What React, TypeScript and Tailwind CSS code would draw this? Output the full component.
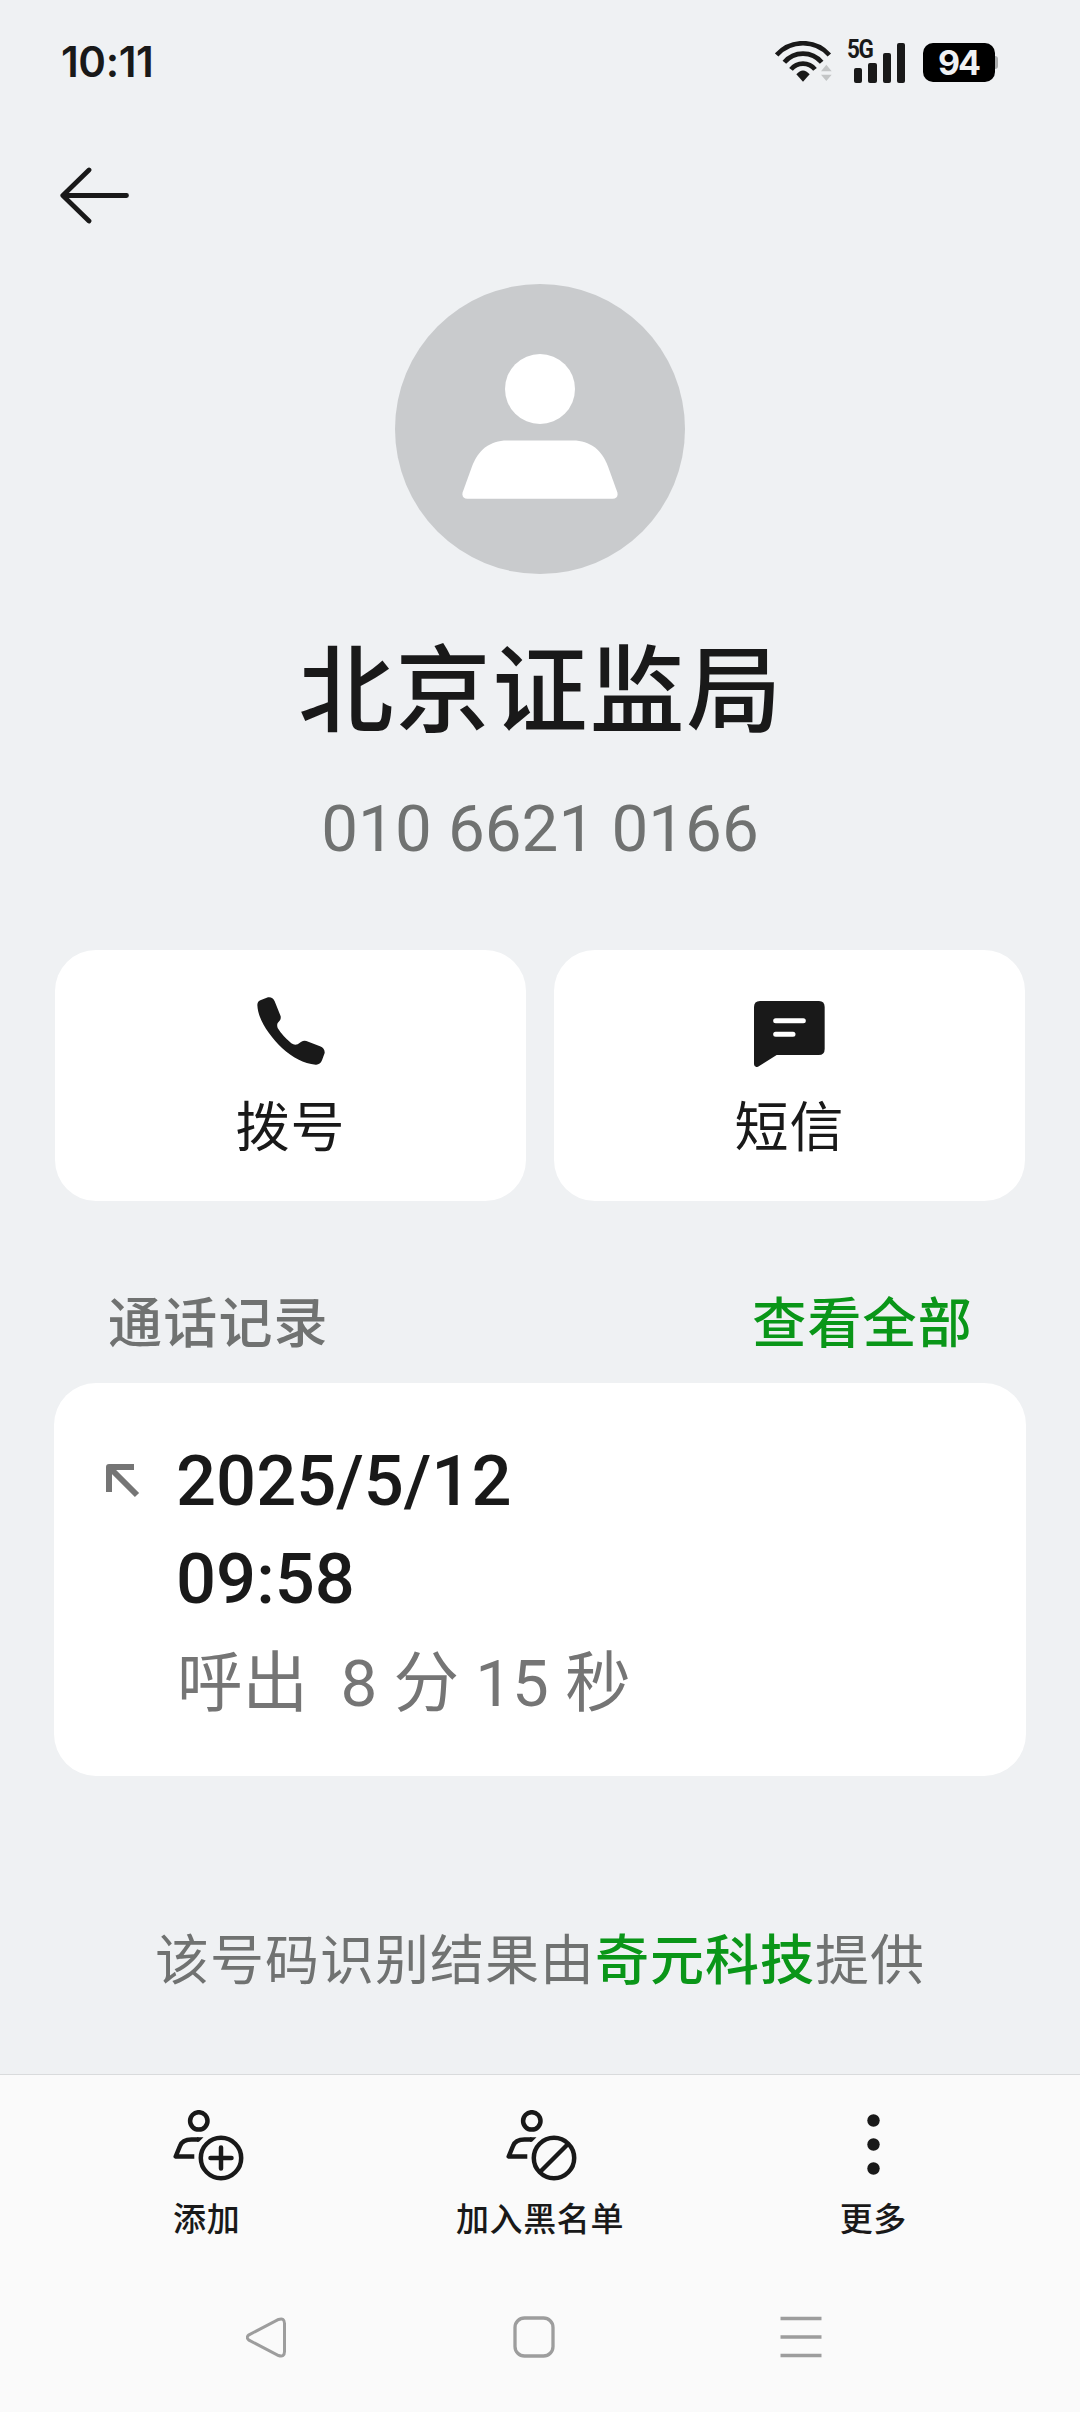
import type { ReactNode } from 'react';

function StatusBar() {
  return (
    <div className="flex h-[120px] items-start justify-between pr-[82px] pl-[61px]">
      <span className="mt-[37px] font-['Inter',sans-serif] text-[42px] leading-[50px] font-semibold tracking-[-0.4px]">
        10:11
      </span>

      <div className="mt-[41px] flex h-[42px] items-start">
        <svg width="58" height="42" viewBox="45 64 174 126" fill="none">
          <g stroke="#191919" strokeWidth="14">
            <path d="M50 106A106 106 0 0 1 208 106" />
            <path d="M73 128A73 73 0 0 1 185 128" />
            <path d="M93 149A46 46 0 0 1 165 149" />
          </g>
          <path d="M109 164Q129 141 149 164L129 186Z" fill="#191919" />
          <path d="M183 155L199 135L215 155ZM183 165L199 184L215 165Z" fill="#c3c5c6" />
        </svg>

        {/* 5G label sits above the two short bars */}
        <div className="relative ml-[21px] flex h-[42px] w-[52px] items-end gap-[6px]">
          <span className="absolute -top-[1px] -left-[7px] origin-left scale-x-[0.9] font-['Roboto',sans-serif] text-[25px] leading-[20px] font-bold tracking-[-1.5px]">
            5G
          </span>
          <span className="h-[15px] w-[8px] rounded-[2px] bg-[#191919]" />
          <span className="h-[20px] w-[9px] rounded-[2px] bg-[#191919]" />
          <span className="h-[30px] w-[8px] rounded-[2px] bg-[#191919]" />
          <span className="h-[40px] w-[8px] rounded-[2px] bg-[#191919]" />
        </div>

        <div className="mt-[2px] ml-[17px] flex items-center">
          <div className="flex h-[39px] w-[72px] items-center justify-center rounded-[10px] bg-black pr-[1px] font-['Inter',sans-serif] text-[34px] leading-[39px] font-bold tracking-[-2px] text-[#eff1f3]">
            94
          </div>
          <span className="h-[13px] w-[3px] rounded-r-[3px] bg-[#a9abac]" />
        </div>
      </div>
    </div>
  );
}

function Avatar() {
  return (
    <svg width="290" height="290" viewBox="0 0 290 290">
      <circle cx="145" cy="145" r="145" fill="#c9cbcd" />
      <circle cx="145" cy="105" r="35" fill="#fff" />
      <path
        d="M112 156.5H178C195 156.5 207 166 213 182.5L222.4 208.5Q223.5 214.5 217.5 214.7H72.5Q66.5 214.5 67.6 208.5L77 182.5C83 166 95 156.5 112 156.5Z"
        fill="#fff"
      />
    </svg>
  );
}

function PhoneIcon() {
  return (
    <svg width="68" height="68" viewBox="0 0 204 204" fill="#191919">
      <path d="M1 24Q1 14 10 10L33 1Q47 -1 53 13L71 58Q72 66 69 70L62 78Q59 84 62 93Q76 116 103 139Q112 146 122 142L133 134Q140 130 148 132L189 148Q204 154 203 168L195 190Q189 204 176 203C140 200 107 182 75 153C38 116 3 70 1 24Z" />
    </svg>
  );
}

function MessageIcon() {
  return (
    <svg className="mt-[4px]" width="71" height="67" viewBox="0 0 213 201">
      <path
        d="M18 0H195Q212 0 212 18V144Q212 162 194 162H68L12 197Q1 201 0 190V18Q0 0 18 0Z"
        fill="#191919"
      />
      <path d="M65 59H148M65 100H117" stroke="#fff" strokeWidth="15" strokeLinecap="round" />
    </svg>
  );
}

function PersonBadgeIcon({ children }: { children: ReactNode }) {
  return (
    <svg className="ml-[4px]" width="71" height="71" viewBox="0 0 71 71" fill="none" stroke="#191919" strokeWidth="4.5">
      <circle cx="25.8" cy="10.9" r="8.7" />
      <path d="M25.5 29.5H18.5C12 29.5 8.7 31.5 7 36L2.7 46.5H21.3" strokeLinejoin="round" />
      <path d="M24 27.25H30.5L26 31.75H24Z" fill="#191919" stroke="none" />
      <circle cx="48" cy="48" r="20.2" />
      {children}
    </svg>
  );
}

function MoreIcon() {
  return (
    <svg width="71" height="71" viewBox="0 0 71 71" fill="#191919">
      <circle cx="35.5" cy="10.5" r="6.2" />
      <circle cx="35.5" cy="34.5" r="6.2" />
      <circle cx="35.5" cy="58.5" r="6.2" />
    </svg>
  );
}

function ActionCard({ icon, label }: { icon: ReactNode; label: string }) {
  return (
    <button className="flex h-[251px] flex-1 flex-col items-center rounded-[41px] bg-white pt-[47px]">
      <span className="flex h-[71px] items-start">{icon}</span>
      <span className="mt-[21px] text-[54px] leading-[80px] tracking-[1px]">{label}</span>
    </button>
  );
}

function BottomAction({ icon, label }: { icon: ReactNode; label: string }) {
  return (
    <button className="flex flex-1 flex-col items-center">
      {icon}
      <span className="mt-[15px] text-[33px] leading-[48px] font-medium tracking-[0.6px]">{label}</span>
    </button>
  );
}

export default function App() {
  return (
    <div className="flex h-[2412px] w-[1080px] flex-col overflow-hidden bg-[#eff1f3] font-['Roboto','Noto_Sans_CJK_SC',sans-serif] text-[#191919]">
      <StatusBar />

      <header className="flex h-[164px] items-start pt-[47px] pl-[60px]">
        <button title="返回">
          <svg width="70" height="57" viewBox="0 0 70 57" fill="none" stroke="#191919" strokeWidth="4.8" strokeLinecap="round" strokeLinejoin="round">
            <path d="M29 3L2.8 28.5L29 54M4 28.5H66.5" />
          </svg>
        </button>
      </header>

      <section className="flex flex-col items-center">
        <Avatar />
        <h1 className="mt-[49px] ml-[2px] text-[95px] leading-[140px] font-medium tracking-[2px]">北京证监局</h1>
        <p className="mt-[26px] text-[65.5px] leading-[80px] text-[#707271]">010 6621 0166</p>
      </section>

      <div className="mt-[81px] flex gap-[28px] px-[55px]">
        <ActionCard icon={<PhoneIcon />} label="拨号" />
        <ActionCard icon={<MessageIcon />} label="短信" />
      </div>

      <div className="mt-[74px] flex h-[108px] items-start justify-between pt-[10px] pr-[107px] pl-[108px] text-[54px] leading-[80px] font-medium tracking-[1.2px]">
        <h2 className="text-[#707271]">通话记录</h2>
        <button className="text-[#0a9618]">查看全部</button>
      </div>

      <div className="mx-[54px] flex h-[393px] rounded-[42px] bg-white pt-[49px] pl-[52px]">
        <svg className="mt-[32px]" width="34" height="34" viewBox="0 0 34 34" fill="none" stroke="#757575" strokeWidth="6">
          <path d="M28 3H3V28" strokeLinejoin="round" />
          <path d="M3 3L31 31" />
        </svg>
        <div className="ml-[36px]">
          <p className="text-[70.5px] leading-[98px] font-medium">
            2025/5/12
            <br />
            09:58
          </p>
          <p className="mt-[3px] ml-[1px] text-[65.5px] leading-[106px] whitespace-pre text-[#757575]">呼出  8 分 15 秒</p>
        </div>
      </div>

      <p className="mt-[146px] text-center text-[54px] leading-[80px] tracking-[1px] text-[#707271]">
        该号码识别结果由<span className="font-medium text-[#0a9618]">奇元科技</span>提供
      </p>

      <footer className="mt-auto h-[338px] border-t border-[#d9dbdc] bg-[#fafafa]">
        <div className="flex h-[206px] px-[40px] pt-[35px]">
          <BottomAction
            label="添加"
            icon={
              <PersonBadgeIcon>
                <path d="M48 37.5V58.5M37.5 48H58.5" strokeLinecap="round" />
              </PersonBadgeIcon>
            }
          />
          <BottomAction
            label="加入黑名单"
            icon={
              <PersonBadgeIcon>
                <path d="M34 62L62 34" />
              </PersonBadgeIcon>
            }
          />
          <BottomAction label="更多" icon={<MoreIcon />} />
        </div>

        {/* System navigation */}
        <nav className="ml-[133px] grid w-[802px] grid-cols-3 justify-items-center pt-[35px]">
          <svg width="42" height="42" viewBox="0 0 42 42" fill="none" stroke="#9d9d9d" strokeWidth="3">
            <path d="M3 18.8L32.5 3.5Q38.5 1.5 38.5 7.5V35.5Q38.5 41.5 32.5 39.5L3 24.2Q-0.5 21.5 3 18.8Z" />
          </svg>
          <svg width="42" height="42" viewBox="0 0 42 42" fill="none" stroke="#9d9d9d" strokeWidth="3.3">
            <rect x="2" y="2" width="38" height="38" rx="9.5" />
          </svg>
          <svg width="42" height="42" viewBox="0 0 42 42" fill="none" stroke="#9d9d9d" strokeWidth="3.5">
            <path d="M0.5 2.5H41.5M0.5 21H41.5M0.5 39.5H41.5" />
          </svg>
        </nav>
      </footer>
    </div>
  );
}
